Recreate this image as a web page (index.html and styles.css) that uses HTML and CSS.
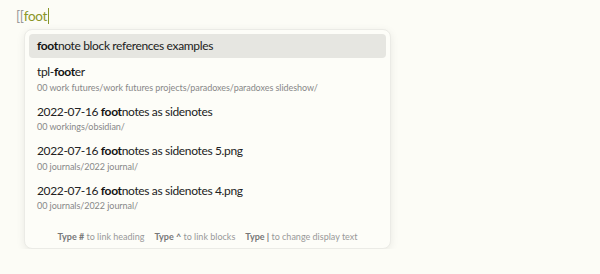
FILE: index.html
```html
<!DOCTYPE html>
<html lang="en">
	<head>
		<meta charset="UTF-8" />
		<meta name="viewport" content="width=device-width, initial-scale=1.0" />
		<title>Link suggest</title>
		<link rel="stylesheet" href="styles.css">
	</head>
	<body>
		<div class="editor-line">
			<span class="brackets">[[</span><span class="query">foot</span><span class="cursor"></span>
		</div>
		<div class="suggest">
			<div class="suggest-item is-selected">
				<div class="item-title"><b>foot</b>note block references examples</div>
			</div>
			<div class="suggest-item">
				<div class="item-title">tpl-<b>foot</b>er</div>
				<div class="item-path">00 work futures/work futures projects/paradoxes/paradoxes slideshow/</div>
			</div>
			<div class="suggest-item">
				<div class="item-title">2022-07-16 <b>foot</b>notes as sidenotes</div>
				<div class="item-path">00 workings/obsidian/</div>
			</div>
			<div class="suggest-item">
				<div class="item-title">2022-07-16 <b>foot</b>notes as sidenotes 5.png</div>
				<div class="item-path">00 journals/2022 journal/</div>
			</div>
			<div class="suggest-item">
				<div class="item-title">2022-07-16 <b>foot</b>notes as sidenotes 4.png</div>
				<div class="item-path">00 journals/2022 journal/</div>
			</div>
			<div class="suggest-footer">
				<span><b>Type #</b> to link heading</span>
				<span><b>Type ^</b> to link blocks</span>
				<span><b>Type |</b> to change display text</span>
			</div>
		</div>
	</body>
</html>
```

FILE: styles.css
```css
body {
	font-family: Lato, "Noto Sans", sans-serif;
	background: #fcfcf6;
	margin: 0;
	padding: 6px 0 0 16px;
	color: #222;
}

.editor-line {
	font-size: 13.5px;
	letter-spacing: -0.3px;
	line-height: 20px;
	height: 20px;
	display: flex;
	align-items: center;
}

.brackets {
	color: #999;
}

.query {
	color: #8a9628;
}

.cursor {
	display: inline-block;
	width: 1px;
	height: 16px;
	background: #8a9628;
	margin-left: 1px;
}

.suggest {
	margin: 3px 0 0 8px;
	width: 357px;
	background: #fdfdf8;
	border: 1px solid #ebebe6;
	border-radius: 8px;
	box-shadow: 0 2px 8px rgba(0, 0, 0, 0.08);
	padding: 4px 4px 1px;
}

.suggest-item {
	padding: 4px 8px 6px;
	border-radius: 4px;
}

.suggest-item.is-selected {
	background: #e6e6e1;
	padding: 4px 8px;
	margin-bottom: 2px;
}

.item-title {
	font-size: 12px;
	letter-spacing: -0.35px;
	line-height: 16px;
	color: #222;
}

.item-title b {
	font-weight: 700;
	color: #111;
}

.item-path {
	font-size: 9px;
	letter-spacing: -0.05px;
	line-height: 13px;
	color: #888;
	margin-top: 0.5px;
}

.suggest-footer {
	display: flex;
	justify-content: center;
	gap: 10px;
	font-size: 9px;
	line-height: 12px;
	color: #999;
	padding: 13px 0 4px;
}

.suggest-footer b {
	font-weight: 700;
	color: #777;
}
```
